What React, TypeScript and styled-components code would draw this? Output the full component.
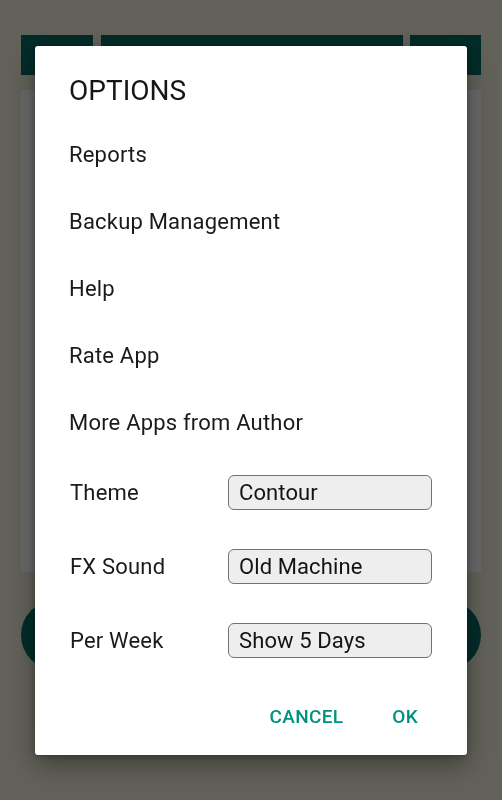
import React from "react";
import styled, { createGlobalStyle } from "styled-components";

const GlobalStyle = createGlobalStyle`
  html, body {
    margin: 0;
    padding: 0;
    background: #62625a;
    font-family: Roboto, "Noto Sans", Arial, sans-serif;
  }
  * { box-sizing: border-box; }
`;

const Screen = styled.div`
  width: 502px;
  height: 800px;
  padding: 35px 21px 0;
  background: #62625a;
  display: flex;
  flex-direction: column;
`;

const TopBar = styled.div`
  display: flex;
  justify-content: space-between;
  height: 40px;
`;

const BarBlock = styled.div<{ $w: number }>`
  width: ${(p) => p.$w}px;
  height: 100%;
  background: #022c29;
`;

const Panel = styled.div`
  margin-top: 15px;
  height: 482px;
  background: #69696a;
`;

const FabRow = styled.div`
  margin-top: 28px;
  display: flex;
  justify-content: space-between;
`;

const Fab = styled.div`
  width: 70px;
  height: 70px;
  border-radius: 50%;
  background: #022c29;
`;

const Overlay = styled.div`
  position: fixed;
  inset: 0;
  display: flex;
  align-items: center;
  justify-content: center;
`;

const Dialog = styled.div`
  width: 432px;
  background: #ffffff;
  border-radius: 3px;
  box-shadow: 0 10px 28px rgba(0, 0, 0, 0.35), 0 2px 6px rgba(0, 0, 0, 0.25);
  padding: 29px 35px 14px 34px;
  display: flex;
  flex-direction: column;
`;

const Title = styled.h1`
  margin: 0 0 14px;
  font-size: 28px;
  line-height: 32px;
  font-weight: 400;
  color: #161616;
`;

const MenuItem = styled.div`
  height: 67px;
  line-height: 67px;
  font-size: 22px;
  letter-spacing: 0.2px;
  color: #1a1a1a;
  white-space: nowrap;
`;

const SettingRow = styled.div`
  height: 74px;
  padding-left: 1px;
  display: grid;
  grid-template-columns: 158px 1fr;
  align-items: center;
  &:first-of-type {
    margin-top: -1px;
  }
`;

const Label = styled.span`
  font-size: 22px;
  letter-spacing: 0.2px;
  color: #1a1a1a;
`;

const SelectBox = styled.div`
  height: 35px;
  border: 1px solid #727272;
  border-radius: 6px;
  background: #eeeeee;
  padding-left: 10px;
  display: flex;
  align-items: center;
  font-size: 22px;
  letter-spacing: 0.1px;
  color: #141414;
`;

const ButtonRow = styled.div`
  margin-top: 15px;
  height: 48px;
  display: flex;
  justify-content: flex-end;
  align-items: center;
  gap: 25px;
  padding-right: 2px;
`;

const TextButton = styled.button`
  border: none;
  background: none;
  padding: 0 12px;
  height: 48px;
  font-family: Roboto, "Noto Sans", Arial, sans-serif;
  font-size: 19px;
  font-weight: 500;
  letter-spacing: 0.3px;
  color: #00917f;
  text-transform: uppercase;
  cursor: pointer;
`;

const menu = ["Reports", "Backup Management", "Help", "Rate App", "More Apps from Author"];
const settings = [
  { label: "Theme", value: "Contour" },
  { label: "FX Sound", value: "Old Machine" },
  { label: "Per Week", value: "Show 5 Days" },
];

export default function App() {
  return (
    <>
      <GlobalStyle />
      <Screen>
        <TopBar>
          <BarBlock $w={72} />
          <BarBlock $w={302} />
          <BarBlock $w={71} />
        </TopBar>
        <Panel />
        <FabRow>
          <Fab />
          <Fab />
        </FabRow>
      </Screen>
      <Overlay>
        <Dialog>
          <Title>OPTIONS</Title>
          {menu.map((m) => (
            <MenuItem key={m}>{m}</MenuItem>
          ))}
          {settings.map((s) => (
            <SettingRow key={s.label}>
              <Label>{s.label}</Label>
              <SelectBox>{s.value}</SelectBox>
            </SettingRow>
          ))}
          <ButtonRow>
            <TextButton>Cancel</TextButton>
            <TextButton>OK</TextButton>
          </ButtonRow>
        </Dialog>
      </Overlay>
    </>
  );
}
